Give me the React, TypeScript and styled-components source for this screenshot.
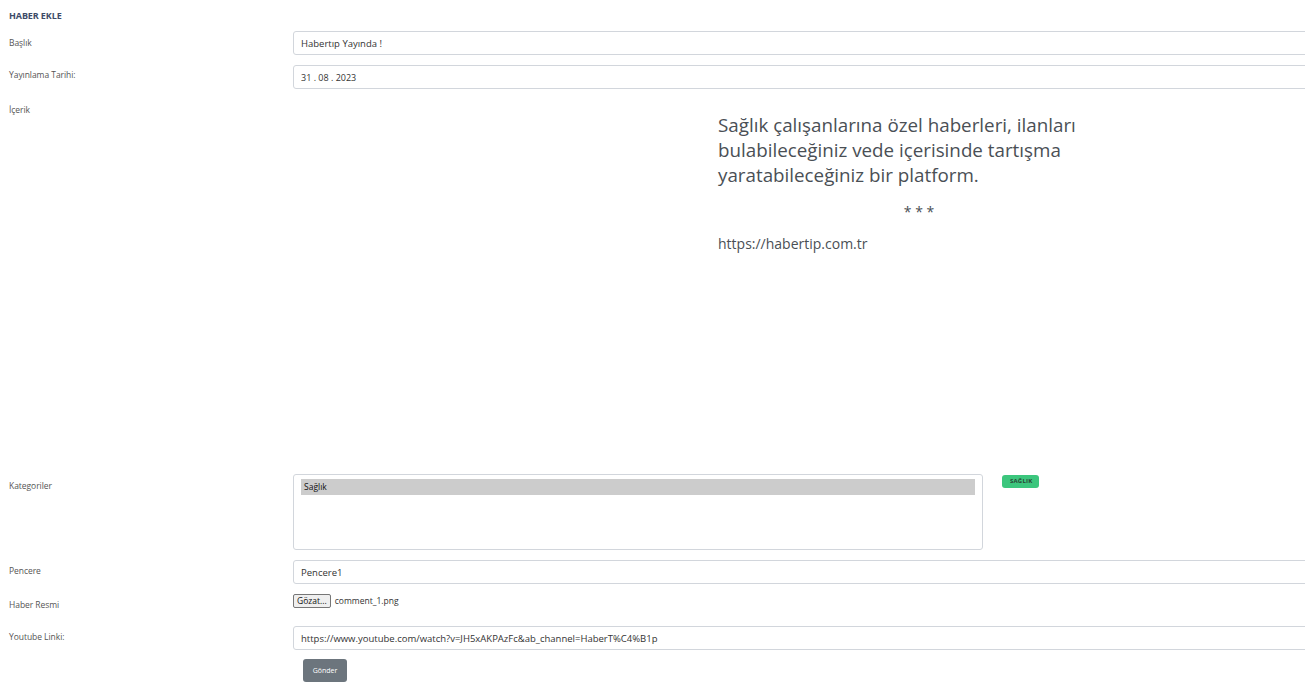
import React from "react";
import styled, { createGlobalStyle } from "styled-components";

const Global = createGlobalStyle`
  html, body { margin: 0; padding: 0; background: #fff; overflow: hidden; }
  body { font-family: "Open Sans", "Noto Sans", sans-serif; }
`;

const Page = styled.div`
  width: 1305px;
  height: 685px;
  overflow: hidden;
  padding: 9px 0 0 9px;
  box-sizing: border-box;
`;

const Title = styled.h1`
  margin: 0 0 8px 0;
  font-size: 9px;
  font-weight: 700;
  color: #3d4a68;
  line-height: 14px;
  letter-spacing: -0.1px;
`;

const Row = styled.div<{ $gap?: number }>`
  display: grid;
  grid-template-columns: 284px 1252px;
  margin-bottom: ${(p) => (p.$gap ?? 10)}px;
`;

const Label = styled.label<{ $top?: number }>`
  font-size: 8.5px;
  color: #555;
  line-height: 12px;
  padding-top: ${(p) => p.$top ?? 5}px;
  letter-spacing: -0.05px;
`;

const Input = styled.input<{ $size?: number }>`
  box-sizing: border-box;
  width: 100%;
  height: 24px;
  border: 1px solid #d2d6dc;
  border-radius: 3px;
  padding: 0 7px;
  font-family: "Open Sans", sans-serif;
  font-size: ${(p) => p.$size ?? 9.5}px;
  color: #333;
  outline: none;
  letter-spacing: 0;
`;

const Content = styled.div`
  height: 365px;
  box-sizing: border-box;
  padding: 14px 0 0 425px;
  color: #4a4f55;
`;

const Lead = styled.p`
  margin: 0;
  width: 410px;
  font-size: 18.8px;
  line-height: 25px;
  letter-spacing: 0;
`;

const Stars = styled.p`
  margin: 14px 0 0 0;
  width: 402px;
  text-align: center;
  font-size: 14px;
  line-height: 20px;
`;

const Link = styled.p`
  margin: 12px 0 0 0;
  font-size: 14px;
  line-height: 20px;
  letter-spacing: 0;
`;

const CatCell = styled.div`
  display: flex;
  align-items: flex-start;
  gap: 19px;
`;

const SelectBox = styled.div`
  box-sizing: border-box;
  width: 690px;
  height: 76px;
  border: 1px solid #d2d6dc;
  border-radius: 3px;
  padding: 4px 7px;
`;

const Option = styled.div<{ $selected?: boolean }>`
  background: ${(p) => (p.$selected ? "#cccccc" : "transparent")};
  font-family: "Open Sans", sans-serif;
  font-size: 8.5px;
  line-height: 16px;
  color: #111;
  padding-left: 3px;
  letter-spacing: 0;
`;

const Badge = styled.span`
  margin-top: 1px;
  background: #3cc67d;
  border-radius: 3px;
  color: #2a4536;
  font-size: 6px;
  font-weight: 700;
  padding: 0 7px 0 8px;
  height: 13px;
  line-height: 13px;
  display: inline-block;
  letter-spacing: 0.2px;
`;

const FileCell = styled.div`
  height: 22px;
  display: flex;
  align-items: flex-start;
  gap: 4px;
  font-size: 8.5px;
  color: #333;
`;

const FileButton = styled.button`
  height: 14px;
  padding: 0 3px;
  border: 1px solid #767676;
  border-radius: 2px;
  background: #efefef;
  font-family: "Open Sans", sans-serif;
  font-size: 8.5px;
  line-height: 12px;
  color: #111;
`;

const FileName = styled.span`
  line-height: 14px;
  letter-spacing: 0;
`;

const Submit = styled.button`
  display: block;
  margin-left: 10px;
  width: 44px;
  height: 23px;
  border: none;
  border-radius: 3px;
  background: #6c757d;
  color: #fff;
  font-family: "Open Sans", sans-serif;
  font-size: 7px;
`;

export default function App() {
  return (
    <>
      <Global />
      <Page>
        <Title>HABER EKLE</Title>
        <Row>
          <Label $top={6}>Başlık</Label>
          <Input defaultValue="Habertıp Yayında !" />
        </Row>
        <Row>
          <Label $top={4}>Yayınlama Tarihi:</Label>
          <Input $size={9} defaultValue="31 . 08 . 2023" />
        </Row>
        <Row>
          <Label $top={5}>İçerik</Label>
          <Content>
            <Lead>
              Sağlık çalışanlarına özel haberleri, ilanları bulabileceğiniz vede içerisinde tartışma yaratabileceğiniz bir platform.
            </Lead>
            <Stars>* * *</Stars>
            <Link>https://habertip.com.tr</Link>
          </Content>
        </Row>
        <Row>
          <Label $top={6}>Kategoriler</Label>
          <CatCell>
            <SelectBox>
              <Option $selected>Sağlık</Option>
            </SelectBox>
            <Badge>SAĞLIK</Badge>
          </CatCell>
        </Row>
        <Row>
          <Label $top={5}>Pencere</Label>
          <Input defaultValue="Pencere1" />
        </Row>
        <Row>
          <Label $top={5}>Haber Resmi</Label>
          <FileCell>
            <FileButton>Gözat...</FileButton>
            <FileName>comment_1.png</FileName>
          </FileCell>
        </Row>
        <Row $gap={9}>
          <Label $top={5}>Youtube Linki:</Label>
          <Input defaultValue="https://www.youtube.com/watch?v=JH5xAKPAzFc&ab_channel=HaberT%C4%B1p" />
        </Row>
        <Row>
          <div />
          <div>
            <Submit>Gönder</Submit>
          </div>
        </Row>
      </Page>
    </>
  );
}
